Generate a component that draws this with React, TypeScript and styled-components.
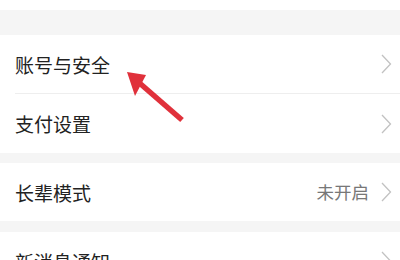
import React from 'react';
import styled, { createGlobalStyle } from 'styled-components';

const GlobalStyle = createGlobalStyle`
    html, body {
        margin: 0;
        padding: 0;
        background: #ffffff;
    }
    body {
        font-family: "Noto Sans CJK SC", "Noto Sans", sans-serif;
        -webkit-font-smoothing: antialiased;
    }
`;

const Page = styled.div`
    position: relative;
    width: 400px;
    height: 260px;
    overflow: hidden;
    background: #f5f5f5;
    display: flex;
    flex-direction: column;
    & > * {
        flex-shrink: 0;
    }
`;

const TopStrip = styled.div`
    height: 10px;
    background: #ffffff;
`;

const Spacer = styled('div')<{size: number}>`
    height: ${props => props.size}px;
`;

const Section = styled.div`
    background: #ffffff;
    display: flex;
    flex-direction: column;
`;

const Row = styled('div')<{height: number}>`
    height: ${props => props.height}px;
    display: flex;
    align-items: center;
    padding: 0 8px 0 15px;
    flex-shrink: 0;
`;

const Label = styled.span`
    flex: 1;
    font-size: 19px;
    color: #222222;
    line-height: 1;
`;

const Value = styled.span`
    font-size: 17.5px;
    color: #777777;
    line-height: 1;
    margin-right: 11px;
`;

const Divider = styled.div`
    height: 1px;
    flex-shrink: 0;
    margin-left: 15px;
    background: #eeeeee;
`;

const ArrowMark = styled.svg`
    position: absolute;
    left: 120px;
    top: 64px;
    pointer-events: none;
`;

const Chevron = () => (
    <svg width="12" height="20" viewBox="0 0 12 20">
        <path d="M2 1 L10.5 10 L2 19" fill="none" stroke="#c2c2c2" strokeWidth="1.3" strokeLinejoin="miter" />
    </svg>
);

interface IItem {
    label: string
    value?: string
    height: number
}

const Item = ({label, value, height}: IItem) => (
    <Row height={height}>
        <Label>{label}</Label>
        {!!value && <Value>{value}</Value>}
        <Chevron />
    </Row>
);

const App = () => {
    return <>
        <GlobalStyle />
        <Page>
            <TopStrip />
            <Spacer size={25} />
            <Section>
                <Item label="账号与安全" height={58} />
                <Divider />
                <Item label="支付设置" height={59} />
            </Section>
            <Spacer size={10} />
            <Section>
                <Item label="长辈模式" value="未开启" height={58} />
            </Section>
            <Spacer size={11} />
            <Section>
                <Item label="新消息通知" height={58} />
            </Section>
            {/* red pointer over the first row */}
            <ArrowMark width="70" height="64" viewBox="120 64 70 64">
                <line x1="136" y1="80" x2="182" y2="120" stroke="#e0313b" strokeWidth="5.5" strokeLinecap="butt" />
                <polygon points="127,72 146,75 135,96" fill="#e0313b" />
            </ArrowMark>
        </Page>
    </>
}

export default App;
